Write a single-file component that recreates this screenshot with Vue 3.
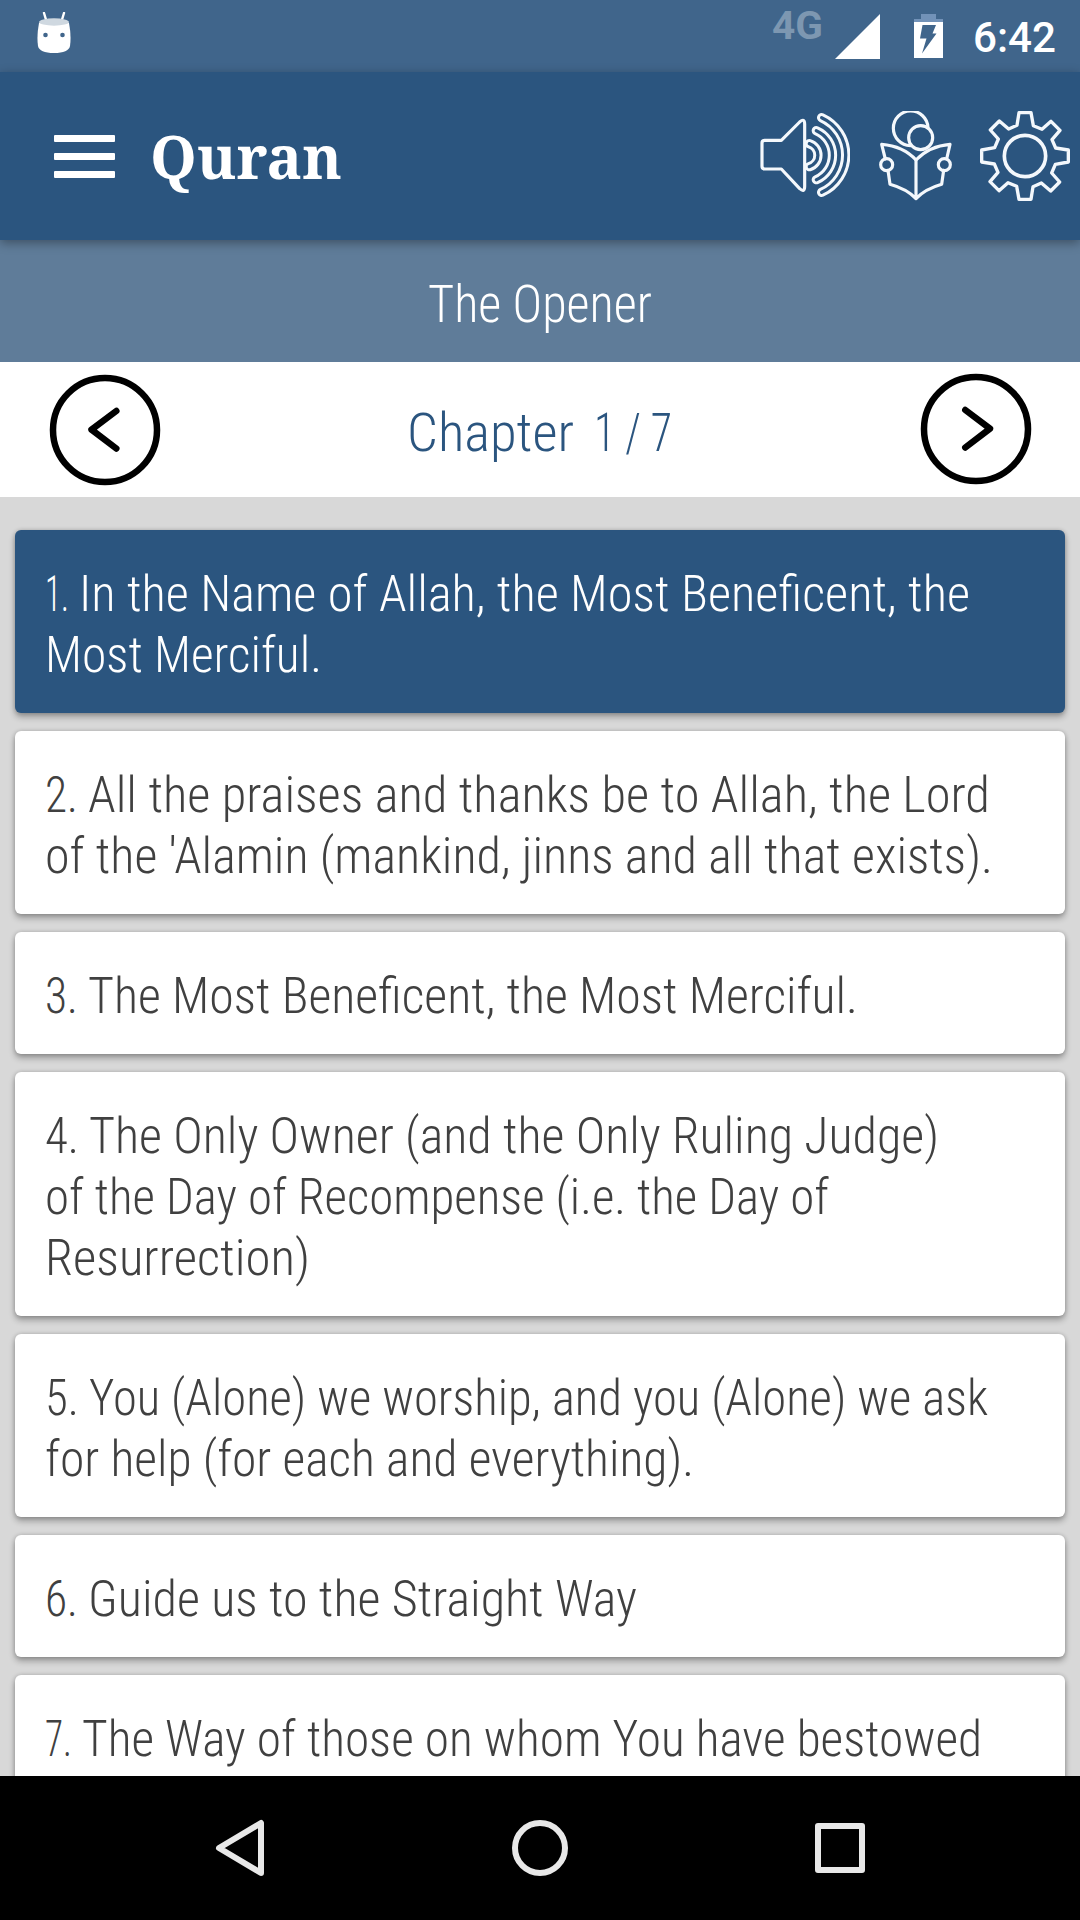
<template>
  <div class="phone">
    <header class="status-bar">
      <svg class="debug-icon" width="34" height="41" viewBox="0 0 34 41">
        <path d="M7 1l3 10M27 1l-3 10" stroke="#fff" stroke-width="2.4" stroke-linecap="round" />
        <path d="M2 11Q-0.500 24 1 34Q2.500 41 17 41Q31.500 41 33 34Q34.500 24 32 11Z" fill="#fff" />
        <ellipse cx="17" cy="10" rx="15" ry="3.700" fill="#cfd8e0" />
        <circle cx="8.500" cy="23" r="2.300" fill="#40658b" />
        <circle cx="25.500" cy="23" r="2.300" fill="#40658b" />
      </svg>
      <div class="status-right">
        <FitText class="network" text="4G" :width="51" :height="72" :baseline="39" />
        <svg class="signal" width="45" height="45" viewBox="0 0 45 45">
          <path d="M0 45L45 0V45Z" fill="#fff" />
        </svg>
        <svg class="battery" width="29" height="44" viewBox="0 0 29 44">
          <path d="M7 0H22V5H29V8H0V5H7Z" fill="#7292b8" />
          <path d="M0 8H29V44H0Z" fill="#fff" />
          <path d="M8.500 11H22L18.500 19.500H22.500L8 39.500L12.500 24.500H6Z" fill="#40658b" />
        </svg>
        <FitText class="clock" text="6:42" :width="83" :height="72" :baseline="52" />
      </div>
    </header>

    <nav class="toolbar">
      <button class="menu" aria-label="Menu">
        <span></span>
        <span></span>
        <span></span>
      </button>
      <FitText class="title" text="Quran" :width="192" :height="168" :baseline="107" />
      <div class="actions">
        <svg class="action" viewBox="0 0 270 270">
          <g v-for="wave in waves" :key="wave">
            <path :d="wave" stroke-width="28" />
            <path :d="wave" class="hollow" stroke-width="10" />
          </g>
          <path
            class="cone"
            d="M6 96Q6 88 14 88H64L119 33Q134 20 134 40V226Q134 246 119 233L64 174H14Q6 174 6 166Z"
          />
        </svg>
        <svg class="action" viewBox="0 0 270 270">
          <path d="M174 50A52 52 0 1 0 121 104" />
          <circle cx="152" cy="80" r="36" />
          <path d="M46 144L35 100Q100 105 138 147Q178 105 240 100L230 144" />
          <path d="M138 147V263M54 178L60 220Q110 234 138 263Q166 234 215 220L221 178" />
          <circle cx="50" cy="161" r="18" />
          <circle cx="223" cy="161" r="18" />
        </svg>
        <svg class="action" viewBox="0 0 270 270">
          <path
            stroke-width="10"
            d="M117 5H153L160 44L186 55L213 31L240 58L216 86L227 111L265 117V153L226 160L215 186L239 213L212 240L184 216L159 227L153 265H117L110 226L84 215L57 239L30 212L54 184L43 159L5 153V117L44 110L55 84L31 57L58 30L86 54L111 43Z"
          />
          <circle cx="135" cy="135" r="62" stroke-width="11" />
        </svg>
      </div>
    </nav>

    <h2 class="surah">
      <FitText text="The Opener" :width="224" :height="122" :baseline="81.5" />
    </h2>

    <section class="pager">
      <button class="arrow" aria-label="Previous">
        <svg width="112" height="112" viewBox="0 0 112 112">
          <circle cx="56" cy="56" r="52" />
          <path d="M67.300 37L42.500 55.700L67.300 74.500" />
        </svg>
      </button>
      <div class="chapter">
        <FitText text="Chapter" :width="167" :height="135" :baseline="89" />
        <FitText text="1 / 7" :width="78" :height="135" :baseline="89" />
      </div>
      <button class="arrow next" aria-label="Next">
        <svg width="112" height="112" viewBox="0 0 112 112">
          <circle cx="56" cy="56" r="52" />
          <path d="M45.300 37L70 55.700L45.300 74.500" />
        </svg>
      </button>
    </section>

    <main class="verses">
      <article
        v-for="(verse, index) in verses"
        :key="index"
        class="verse"
        :class="{ active: index === current }"
        @click="current = index"
      >
        <div v-for="(line, row) in verse.lines" :key="row" class="line">
          <FitText
            v-if="row === 0"
            :text="`${index + 1}.`"
            :width="verse.numberWidth"
            :height="61"
            :baseline="51"
          />
          <FitText :text="line.text" :width="line.width" :height="61" :baseline="51" />
        </div>
      </article>
    </main>

    <footer class="nav-bar">
      <svg width="56" height="60" viewBox="0 0 56 60">
        <path d="M49 5V55L7 30Z" />
      </svg>
      <svg width="60" height="60" viewBox="0 0 60 60">
        <circle cx="30" cy="30" r="25" />
      </svg>
      <svg width="60" height="60" viewBox="0 0 60 60">
        <rect x="8" y="8" width="44" height="44" />
      </svg>
    </footer>
  </div>
</template>

<script setup>
import { h, ref } from 'vue';

// one line of text, fitted to a fixed width
const FitText = (props) =>
  h('svg', { class: 'fit', width: props.width, height: props.height }, [
    h(
      'text',
      { x: 0, y: props.baseline, textLength: props.width, lengthAdjust: 'spacingAndGlyphs' },
      props.text
    ),
  ]);
FitText.props = ['text', 'width', 'height', 'baseline'];

const current = ref(0);

const waves = [
  'M148 98A36 36 0 0 1 148 167',
  'M169 59A80 80 0 0 1 169 206',
  'M185 20A123 123 0 0 1 185 244',
];

const verses = [
  {
    numberWidth: 24,
    lines: [
      { text: 'In the Name of Allah, the Most Beneficent, the', width: 891 },
      { text: 'Most Merciful.', width: 277 },
    ],
  },
  {
    numberWidth: 33,
    lines: [
      { text: 'All the praises and thanks be to Allah, the Lord', width: 902 },
      { text: "of the 'Alamin (mankind, jinns and all that exists).", width: 948 },
    ],
  },
  {
    numberWidth: 33,
    lines: [{ text: 'The Most Beneficent, the Most Merciful.', width: 770 }],
  },
  {
    numberWidth: 34,
    lines: [
      { text: 'The Only Owner (and the Only Ruling Judge)', width: 850 },
      { text: 'of the Day of Recompense (i.e. the Day of', width: 784 },
      { text: 'Resurrection)', width: 265 },
    ],
  },
  {
    numberWidth: 34,
    lines: [
      { text: 'You (Alone) we worship, and you (Alone) we ask', width: 899 },
      { text: 'for help (for each and everything).', width: 649 },
    ],
  },
  {
    numberWidth: 33,
    lines: [{ text: 'Guide us to the Straight Way', width: 549 }],
  },
  {
    numberWidth: 27,
    lines: [{ text: 'The Way of those on whom You have bestowed', width: 900 }],
  },
];
</script>

<style>
body {
  margin: 0;
}
</style>

<style scoped>
.phone {
  width: 1080px;
  height: 1920px;
  display: flex;
  flex-direction: column;
  overflow: hidden;
  background-color: #d8d8d8;
  color: #404040;
  font-family: Roboto, sans-serif;
  font-stretch: 75%;
  font-weight: 300;
  font-size: 50.6px;
}

svg {
  display: block;
  flex: none;
}

.fit {
  overflow: visible;
  fill: currentColor;
}

button {
  padding: 0;
  border: none;
  background: none;
}

.status-bar {
  height: 72px;
  flex: none;
  display: flex;
  justify-content: space-between;
  padding: 0 24px 0 37px;
  background-color: #40658b;
  color: #fff;
  font-stretch: 100%;
}

.debug-icon {
  margin-top: 12px;
}

.status-right {
  display: flex;
}

.network {
  color: #7d97b1;
  font-size: 38px;
  font-weight: 700;
}

.signal {
  margin: 14px 34px 0 12px;
}

.battery {
  margin: 14px 30px 0 0;
}

.clock {
  font-size: 42.5px;
  font-weight: 500;
}

.toolbar {
  height: 168px;
  flex: none;
  display: flex;
  align-items: center;
  padding: 0 10px 0 54px;
  background-color: #2b557f;
  color: #fff;
  z-index: 1;
  box-shadow: 0 3px 10px rgba(0, 0, 0, 0.35);
}

.menu {
  width: 61px;
  display: flex;
  flex-direction: column;
  gap: 11px;
  margin-right: 35px;
}

.menu span {
  height: 7px;
  border-radius: 1px;
  background-color: #fff;
}

.title {
  font-family: 'Noto Serif', 'DejaVu Serif', serif;
  font-stretch: 100%;
  font-size: 60px;
  font-weight: 700;
}

.actions {
  display: flex;
  gap: 20px;
  margin-left: auto;
}

.action {
  width: 90px;
  height: 90px;
  fill: none;
  stroke: #f4f8fc;
  stroke-width: 9.5;
  stroke-linecap: round;
  stroke-linejoin: round;
}

.hollow {
  stroke: #2b557f;
}

.cone {
  fill: #2b557f;
}

.surah {
  height: 122px;
  flex: none;
  display: flex;
  justify-content: center;
  margin: 0;
  background-color: #5f7c99;
  color: #fff;
  font-size: 51px;
  font-weight: 300;
}

.pager {
  height: 135px;
  flex: none;
  display: flex;
  align-items: center;
  justify-content: space-between;
  padding: 0 48px 0 49px;
  background-color: #fff;
}

.chapter {
  display: flex;
  gap: 20px;
  margin-right: 2px;
  color: #2b557f;
  font-size: 54px;
}

.arrow svg {
  fill: none;
  stroke: #000;
  stroke-width: 6.5;
  stroke-linecap: round;
  stroke-linejoin: round;
}

.next {
  margin-bottom: 2px;
}

.verses {
  flex: 1;
  min-height: 0;
  display: flex;
  flex-direction: column;
  gap: 18px;
  padding: 33px 15px 0;
  overflow: hidden;
}

.verse {
  flex: none;
  padding: 30px 30px 31px;
  border-radius: 6px;
  background-color: #fff;
  box-shadow: 0 4px 6px rgba(0, 0, 0, 0.3), 0 0 4px rgba(0, 0, 0, 0.18);
}

.verse.active {
  background-color: #2b557f;
  color: #fff;
}

.line {
  display: flex;
  gap: 10px;
}

.nav-bar {
  height: 144px;
  flex: none;
  display: grid;
  grid-template-columns: repeat(3, 300px);
  justify-content: center;
  align-items: center;
  justify-items: center;
  background-color: #000;
}

.nav-bar svg {
  fill: none;
  stroke: #e8e8e8;
  stroke-width: 6;
  stroke-linejoin: round;
}
</style>
